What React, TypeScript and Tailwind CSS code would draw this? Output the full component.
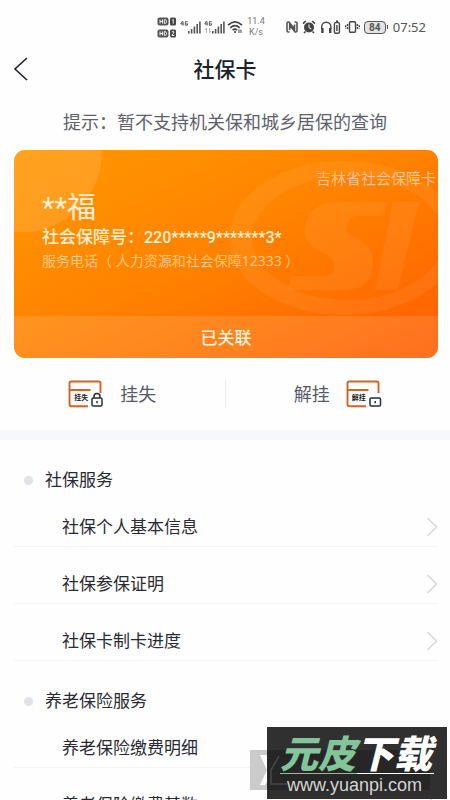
import type { ReactNode } from "react";

interface Section {
  title: string;
  items: string[];
}

const SECTIONS: Section[] = [
  {
    title: "社保服务",
    items: ["社保个人基本信息", "社保参保证明", "社保卡制卡进度"],
  },
  {
    title: "养老保险服务",
    items: ["养老保险缴费明细", "养老保险缴费基数"],
  },
];

function HdBadge({ sim }: { sim: string }) {
  return (
    <svg viewBox="0 0 19 9" className="h-[9px] w-[19px]">
      <rect x="0.5" y="0.5" width="11" height="8" rx="2" fill="#555" />
      <path d="M3 2.5v4M3 4.5h2.5M5.5 2.5v4M7.3 2.6v3.8h.9q1.3-.2 1.3-1.9t-1.3-1.9z" stroke="#fff" strokeWidth="0.9" fill="none" />
      <rect x="13" y="0.5" width="6" height="8" rx="1.5" fill="#444" />
      <path d={sim === "1" ? "M15.3 3l.9-.7v4.4" : "M14.7 3q1.3-1.2 2.3 0q.2 1-2.2 3.4h2.6"} stroke="#fff" strokeWidth="0.9" fill="none" />
    </svg>
  );
}

function Signal({ weak }: { weak?: boolean }) {
  return (
    <svg viewBox="0 0 21 14" className="h-[14px] w-[21px]" fill="none" stroke="#555">
      <path d="M2.5 1L.8 4h2.7M3 1.5v4M7.6 1.7H5.4v3.5h2V3.7h-1" strokeWidth="1" />
      {weak && <path d="M2.5 13V8L1 10M5.5 8v5L7 11" stroke="#bbb" strokeWidth="1" />}
      <path d="M8.8 11v2.5M11.6 9v4.5M14.4 6.5v7M17.2 4v9.5" strokeWidth="1.6" />
      <path d="M19.9 1.5v12" strokeWidth="1.6" />
    </svg>
  );
}

function StatusBar() {
  return (
    <div className="flex h-[52px] items-center pt-[2px] pr-6 pl-[157px] text-[#555]">
      <div className="flex flex-col gap-[3px]">
        <HdBadge sim="1" />
        <HdBadge sim="2" />
      </div>
      <div className="ml-1 flex gap-[3px]">
        <Signal />
        <Signal weak />
      </div>
      <svg viewBox="0 0 16 14" className="ml-[2px] h-[14px] w-4" fill="none" stroke="#444" strokeWidth="1.6">
        <path d="M1 5.2Q8-1.4 15 5.2M3.3 7.8Q8 3.4 12.7 7.8M5.6 10.2Q8 8 10.2 10.2" />
        <circle cx="8" cy="12" r="1.1" fill="#444" stroke="none" />
        <path d="M12 9.5v3.5M14 9.5v3.5" strokeWidth="1" />
      </svg>
      <div className="ml-1 w-[18px] text-center font-[Roboto,sans-serif] text-[9px] leading-[11px] text-[#777]">
        <div>11.4</div>
        <div>K/s</div>
      </div>
      <div className="ml-auto flex items-center gap-[2px]">
        <svg viewBox="0 0 12 12" className="h-3 w-3" fill="none" stroke="#555" strokeWidth="1.6">
          <path d="M3.5 11H2.3Q1 11 1 9.7V2.3Q1 1 2.3 1H3L8.5 8V3.5M8.5 1h1.2Q11 1 11 2.3v7.4Q11 11 9.7 11H9L3.7 4v5" />
        </svg>
        <svg viewBox="0 0 14 14" className="ml-[2px] h-[14px] w-[14px]">
          <circle cx="7" cy="7.4" r="5" fill="#444" />
          <path d="M1 3.7L3.8 1M13 3.7L10.2 1M3.5 11.5L2 13M10.5 11.5L12 13" stroke="#444" strokeWidth="1.6" />
          <path d="M7 4.5v3.2l2.3 1.2" stroke="#fff" strokeWidth="1" fill="none" />
        </svg>
        <svg viewBox="0 0 21 14" className="ml-[2px] h-[14px] w-[21px]" fill="none" stroke="#444" strokeWidth="1.4">
          <path d="M1.7 9V7a4.6 4.8 0 0 1 9.2 0v2" />
          <path d="M2.4 8v5M10.2 8v5" strokeWidth="2.4" />
          <rect x="14.4" y="2.6" width="5" height="10.6" rx="1.3" />
          <path d="M16 1.3h2M16.9 5v6" />
        </svg>
        <svg viewBox="0 0 15 14" className="ml-[2px] h-[14px] w-[15px]" fill="none" stroke="#444" strokeWidth="1.4">
          <rect x="4.5" y="1.7" width="6" height="10.6" rx="1" />
          <path d="M2.6 4v6M12.4 4v6M.7 5.3v3.4M14.3 5.3v3.4" strokeDasharray="2 1" />
        </svg>
        <div className="ml-[2px] flex items-center">
          <span className="flex h-[13px] w-[22px] items-center justify-center rounded-[4px] border border-[#555] bg-[#e4e4e4] font-[Roboto,sans-serif] text-[10px] font-bold text-[#555]">
            84
          </span>
          <span className="ml-px h-1 w-px bg-[#555]" />
        </div>
        <span className="ml-[3px] text-[13px] leading-4">07:52</span>
      </div>
    </div>
  );
}

function CardIcon({ label, children }: { label: string; children: ReactNode }) {
  return (
    <span className="relative h-7 w-9">
      <svg viewBox="0 0 36 28" className="h-7 w-9" fill="none">
        <path
          d="M20 26.2H3.2Q1.5 26.2 1.5 24.5V3.2Q1.5 1.5 3.2 1.5h27.6q1.7 0 1.7 1.7V13M2 10h20.5"
          stroke="#cf6429"
          strokeWidth="1.9"
        />
        {children}
      </svg>
      <span className="absolute top-[13px] left-[6px] text-[7px] leading-[10px] font-bold whitespace-nowrap text-[#222]">
        {label}
      </span>
    </span>
  );
}

function SocialCard() {
  return (
    <section className="relative mx-[14px] mr-3 flex h-[208px] flex-col overflow-hidden rounded-[11px] bg-linear-to-br from-[#ff9800] via-[#ff8400] via-45% to-[#ff5c00] text-[#fff0d5]">
      <div className="absolute -top-[78px] -left-[72px] h-40 w-40 rounded-full bg-white/12" />
      <svg viewBox="0 0 212 166" className="absolute top-0 right-0 h-[166px] w-[212px]" fill="#fff" fillOpacity="0.06">
        <path
          fillRule="evenodd"
          d="M3 88a115 77 0 1 0 230 0a115 77 0 1 0-230 0zM26 88a96 62 0 1 1 192 0a96 62 0 1 1-192 0z"
        />
        <path d="M161 52H112C94 52 83 60 79 75C76 89 83 95 96 102C106 107 109 111 108 119Q107 126 98 126H66L62 140H116C136 140 145 132 147 116C148 100 143 94 127 87C119 83 119 79 122 72Q124 66 131 66H157Z" />
        <path d="M167 52H193L172 140H149Z" />
      </svg>
      <div className="relative flex-1">
        <div className="pt-[18px] pr-[2px] text-right text-[15px] leading-5 text-[#ffc490]">
          吉林省社会保障卡
        </div>
        <div className="pl-7">
          <h2 className="font-[Roboto,'Noto_Sans_CJK_SC',sans-serif] text-[29px] leading-10">**福</h2>
          <p className="text-[17px] leading-[18px] font-medium">
            社会保障号：
            <span className="font-[Roboto,sans-serif] text-[16px]">220*****9*******3*</span>
          </p>
          <p className="pt-1 text-[14px] leading-5 text-[#ffc681]">服务电话（ 人力资源和社会保障12333 ）</p>
        </div>
      </div>
      <button className="relative h-[42px] bg-white/12 pt-[2px] text-[17px] font-medium">已关联</button>
    </section>
  );
}

function ServiceSection({ title, items }: Section) {
  return (
    <section>
      <h2 className="flex h-[50px] items-center pt-[30px] pl-6 text-[17px] leading-5">
        <span className="mr-3 h-[9px] w-[9px] rounded-full bg-[#e1e2e6]" />
        {title}
      </h2>
      <ul className="mr-3 ml-[14px]">
        {items.map((item) => (
          <li key={item}>
            <button className="flex h-[57px] w-full items-center justify-between border-b border-[#f4f4f6] pt-[17px] pl-12 text-left text-[17px]">
              {item}
              <svg viewBox="0 0 12 20" className="h-5 w-3" fill="none" stroke="#d2d2d5" strokeWidth="1.2">
                <path d="M1.5 1L10.5 10L1.5 19" />
              </svg>
            </button>
          </li>
        ))}
      </ul>
    </section>
  );
}

function Watermark() {
  return (
    <div className="absolute right-[3px] bottom-px w-[197px]">
      <svg viewBox="0 0 18 40" className="absolute top-[23px] left-0 h-10 w-[18px]">
        <path d="M0 0h18v40H0z" fill="#cbcbcb" />
        <path d="M10 5h7l1 2v23l-3 5H10l7-15z" fill="#fff" />
      </svg>
      <div className="relative ml-[17px] h-[72px] bg-[#303030]">
        <div className="absolute top-[23px] left-0 h-10 w-[163px] bg-black/20">
          <svg viewBox="0 0 30 40" className="h-10 w-[30px]" fill="none" stroke="#484848" strokeWidth="1.5">
            <path d="M12 6L4 20v14h16" />
          </svg>
        </div>
        <div className="relative px-[13px] pt-[7px]">
          <div className="flex h-[38px] items-center text-[38px] leading-[38px] font-black whitespace-nowrap text-white italic">
            <span className="text-[#83c49b]">元皮</span>下载
          </div>
          <div className="mt-px flex h-px">
            <span className="flex-1 bg-[#83c49b]" />
            <span className="flex-1 bg-white" />
          </div>
          <div className="pl-[7px] font-['Liberation_Sans',sans-serif] text-[18px] leading-[22px] text-[#d5d5d5]">
            www.yuanpi.com
          </div>
        </div>
      </div>
    </div>
  );
}

export default function App() {
  return (
    <div className="relative h-screen overflow-hidden bg-[#fefefe] font-['Noto_Sans','Noto_Sans_CJK_SC',sans-serif] text-[#292a33]">
      <StatusBar />
      <header className="grid h-[34px] grid-cols-[40px_1fr_40px] items-center">
        <button aria-label="返回" className="pl-[13px]">
          <svg viewBox="0 0 15 24" className="h-6 w-[15px]" fill="none" stroke="#20222b" strokeWidth="1.6">
            <path d="M14 1L2 12L14 23" />
          </svg>
        </button>
        <h1 className="pt-[2px] text-center text-[21px] font-medium text-[#20222b]">社保卡</h1>
      </header>
      <p className="pt-6 pb-4 text-center text-[18px] leading-6 text-[#5d616c]">
        提示：暂不支持机关保和城乡居保的查询
      </p>
      <SocialCard />
      <div className="flex h-[72px] items-center text-[18px] text-[#565a68]">
        <button className="flex flex-1 items-center justify-center gap-4">
          <CardIcon label="挂失">
            <path d="M26 18v-1.6a3 3 0 0 1 6 0V18" stroke="#292d3b" strokeWidth="1.5" />
            <rect x="24" y="18" width="10" height="8" rx="1.3" stroke="#292d3b" strokeWidth="1.5" />
            <path d="M29 21v2.2" stroke="#292d3b" strokeWidth="1.5" />
          </CardIcon>
          挂失
        </button>
        <span className="h-7 w-px bg-[#ededf0]" />
        <button className="flex flex-1 items-center justify-center gap-4">
          解挂
          <CardIcon label="解挂">
            <rect x="24" y="18" width="10.5" height="8" rx="1.3" stroke="#292d3b" strokeWidth="1.5" />
            <path d="M29.2 21v2.2" stroke="#292d3b" strokeWidth="1.5" />
          </CardIcon>
        </button>
      </div>
      <div className="h-[10px] bg-[#f7f8fa]" />
      {SECTIONS.map((section) => (
        <ServiceSection key={section.title} {...section} />
      ))}
      <Watermark />
    </div>
  );
}
